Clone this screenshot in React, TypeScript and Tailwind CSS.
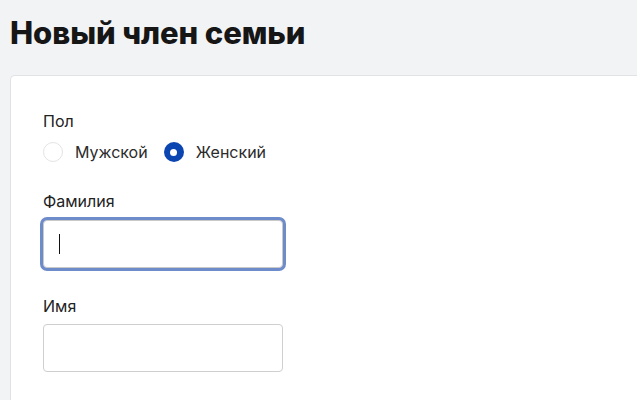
import { useState } from "react"

function Radio({ checked, label, onClick }: { checked: boolean; label: string; onClick: () => void }) {
  return (
    <button type="button" onClick={onClick} className="flex h-6 items-center gap-3">
      {checked ? (
        <span className="flex h-5 w-5 items-center justify-center rounded-full bg-[#0b45b1]">
          <span className="h-[7px] w-[7px] rounded-full bg-white" />
        </span>
      ) : (
        <span className="h-5 w-5 rounded-full border border-[#e3e4e6] bg-white" />
      )}
      <span className="text-[16px] leading-6 text-[#2b2b2b]">{label}</span>
    </button>
  )
}

export default function App() {
  const [sex, setSex] = useState("f")

  return (
    <div className="h-[400px] overflow-hidden bg-[#f2f3f5] pl-[10px] pt-[14px]" style={{ fontFamily: "Inter, 'Noto Sans', sans-serif" }}>
      <h1 className="text-[31px] font-extrabold leading-[38px] tracking-[-0.1px] text-[#161616]">Новый член семьи</h1>

      <div className="mt-[23px] h-[400px] rounded-tl-[5px] border-l border-t border-[#e1e2e5] bg-white pl-[32px] pt-[33px]">
        <div className="text-[16px] leading-6 text-[#222]">Пол</div>
        <div className="mt-[7px] flex items-center gap-[16px]">
          <Radio checked={sex === "m"} label="Мужской" onClick={() => setSex("m")} />
          <Radio checked={sex === "f"} label="Женский" onClick={() => setSex("f")} />
        </div>

        <div className="mt-[25px] text-[16px] leading-6 text-[#222]">Фамилия</div>
        <div className="mt-[7px] flex h-[48px] w-[240px] items-center rounded-[4px] border border-[#c9c9c9] bg-white pl-[15px] shadow-[0_0_0_3px_#6f8cca]">
          <span className="h-[20px] w-[1px] bg-[#111]" />
        </div>

        <div className="mt-[26px] text-[16px] leading-6 text-[#222]">Имя</div>
        <input className="mt-[6px] h-[48px] w-[240px] rounded-[4px] border border-[#cfcfcf] bg-white px-[15px] outline-none" />
      </div>
    </div>
  )
}
